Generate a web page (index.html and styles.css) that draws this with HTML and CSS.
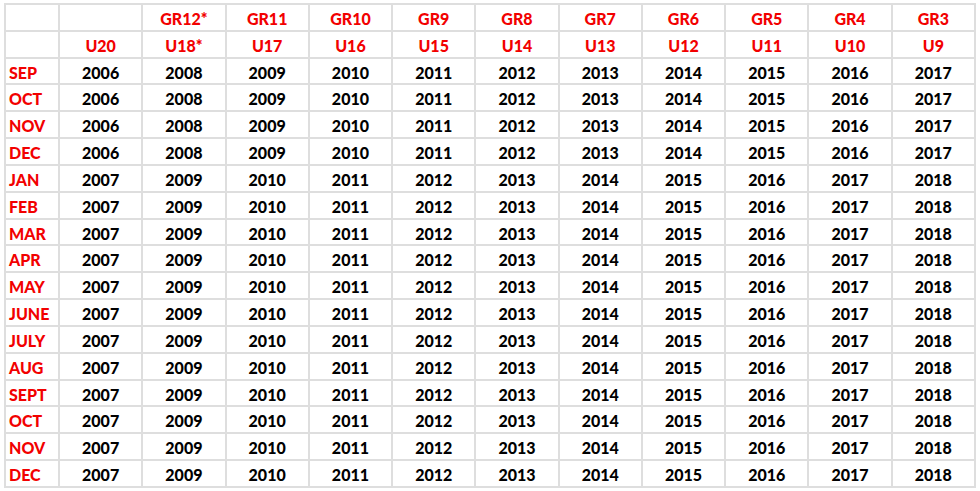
FILE: index.html
```html
<!DOCTYPE html>
<html>
<head>
<meta charset="utf-8">
<link rel="stylesheet" href="styles.css">
</head>
<body>
<table class="grid">
<colgroup><col class="c-month"><col span="11" class="c-year"></colgroup>
<tr class="hdr"><td></td><td></td><td>GR12*</td><td>GR11</td><td>GR10</td><td>GR9</td><td>GR8</td><td>GR7</td><td>GR6</td><td>GR5</td><td>GR4</td><td>GR3</td></tr>
<tr class="hdr"><td></td><td>U20</td><td>U18*</td><td>U17</td><td>U16</td><td>U15</td><td>U14</td><td>U13</td><td>U12</td><td>U11</td><td>U10</td><td>U9</td></tr>
<tr><th>SEP</th><td>2006</td><td>2008</td><td>2009</td><td>2010</td><td>2011</td><td>2012</td><td>2013</td><td>2014</td><td>2015</td><td>2016</td><td>2017</td></tr>
<tr><th>OCT</th><td>2006</td><td>2008</td><td>2009</td><td>2010</td><td>2011</td><td>2012</td><td>2013</td><td>2014</td><td>2015</td><td>2016</td><td>2017</td></tr>
<tr><th>NOV</th><td>2006</td><td>2008</td><td>2009</td><td>2010</td><td>2011</td><td>2012</td><td>2013</td><td>2014</td><td>2015</td><td>2016</td><td>2017</td></tr>
<tr><th>DEC</th><td>2006</td><td>2008</td><td>2009</td><td>2010</td><td>2011</td><td>2012</td><td>2013</td><td>2014</td><td>2015</td><td>2016</td><td>2017</td></tr>
<tr><th>JAN</th><td>2007</td><td>2009</td><td>2010</td><td>2011</td><td>2012</td><td>2013</td><td>2014</td><td>2015</td><td>2016</td><td>2017</td><td>2018</td></tr>
<tr><th>FEB</th><td>2007</td><td>2009</td><td>2010</td><td>2011</td><td>2012</td><td>2013</td><td>2014</td><td>2015</td><td>2016</td><td>2017</td><td>2018</td></tr>
<tr><th>MAR</th><td>2007</td><td>2009</td><td>2010</td><td>2011</td><td>2012</td><td>2013</td><td>2014</td><td>2015</td><td>2016</td><td>2017</td><td>2018</td></tr>
<tr><th>APR</th><td>2007</td><td>2009</td><td>2010</td><td>2011</td><td>2012</td><td>2013</td><td>2014</td><td>2015</td><td>2016</td><td>2017</td><td>2018</td></tr>
<tr><th>MAY</th><td>2007</td><td>2009</td><td>2010</td><td>2011</td><td>2012</td><td>2013</td><td>2014</td><td>2015</td><td>2016</td><td>2017</td><td>2018</td></tr>
<tr><th>JUNE</th><td>2007</td><td>2009</td><td>2010</td><td>2011</td><td>2012</td><td>2013</td><td>2014</td><td>2015</td><td>2016</td><td>2017</td><td>2018</td></tr>
<tr><th>JULY</th><td>2007</td><td>2009</td><td>2010</td><td>2011</td><td>2012</td><td>2013</td><td>2014</td><td>2015</td><td>2016</td><td>2017</td><td>2018</td></tr>
<tr><th>AUG</th><td>2007</td><td>2009</td><td>2010</td><td>2011</td><td>2012</td><td>2013</td><td>2014</td><td>2015</td><td>2016</td><td>2017</td><td>2018</td></tr>
<tr><th>SEPT</th><td>2007</td><td>2009</td><td>2010</td><td>2011</td><td>2012</td><td>2013</td><td>2014</td><td>2015</td><td>2016</td><td>2017</td><td>2018</td></tr>
<tr><th>OCT</th><td>2007</td><td>2009</td><td>2010</td><td>2011</td><td>2012</td><td>2013</td><td>2014</td><td>2015</td><td>2016</td><td>2017</td><td>2018</td></tr>
<tr><th>NOV</th><td>2007</td><td>2009</td><td>2010</td><td>2011</td><td>2012</td><td>2013</td><td>2014</td><td>2015</td><td>2016</td><td>2017</td><td>2018</td></tr>
<tr><th>DEC</th><td>2007</td><td>2009</td><td>2010</td><td>2011</td><td>2012</td><td>2013</td><td>2014</td><td>2015</td><td>2016</td><td>2017</td><td>2018</td></tr>
</table>
</body>
</html>
```
FILE: styles.css
```css
html, body {
  margin: 0;
  padding: 0;
  background: #ffffff;
}
body {
  padding: 3px 0 0 4px;
  font-family: Lato, "Open Sans", "Liberation Sans", sans-serif;
  font-weight: 700;
  font-size: 16px;
}
.grid {
  border-collapse: collapse;
  table-layout: fixed;
  width: 972px;
  height: 485px;
}
.c-month { width: 54px; }
.grid td, .grid th {
  border: 2px solid #dedede;
  padding: 3px 0 0 0;
  line-height: 1;
  vertical-align: middle;
  color: #000000;
  text-align: center;
  font-weight: 900;
}
.grid th {
  text-align: left;
  padding-left: 3px;
  color: #f20000;
}
.grid .hdr td {
  color: #f20000;
}
```
